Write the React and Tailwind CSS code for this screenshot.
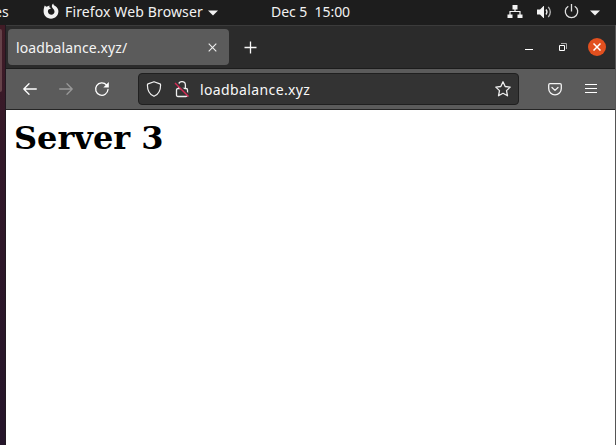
function FirefoxGlyph() {
  return (
    <svg width="16" height="16" viewBox="0 0 16 16" className="shrink-0">
      <path fill="#f2f2f2" fillRule="evenodd" d="M1.800 2.600 3.200 3.800 4.800 3.200 6.500 2.500 6.300 4.200 7.800 5 7.500 5.800 6 6.200C5 6.800 4.800 8 5 9c.4 1.700 1.700 2.700 3.300 2.700 2 0 3.300-1.500 3.200-3.300-.1-1.500-1-2.300-1.800-3.200C8.200 3.600 8.700 1.600 10.200.4c.2 1.500 1.200 1.900 2.400 2.900 1.700 1.300 2.800 2.900 2.800 5 0 4.200-3.200 7.400-7.400 7.400S.6 12.500.6 8.300C.6 6 1 4.300 1.800 2.600Z" />
    </svg>
  );
}

function Caret() {
  return (
    <svg width="10" height="6" viewBox="0 0 10 6" className="shrink-0">
      <path fill="#f2f2f2" d="M0 .5h10L5 5.500Z" />
    </svg>
  );
}

function NetworkIcon() {
  return (
    <svg width="16" height="14" viewBox="0 0 16 14" className="shrink-0">
      <path fill="#f2f2f2" d="M5.500 0h5v4.500h-5ZM.5 9.500h5V13h-5ZM10.500 9.500h5V13h-5Z" />
      <path fill="none" stroke="#f2f2f2" strokeWidth="1.200" d="M8 4v3M3 10V6.500h10V10" />
    </svg>
  );
}

function VolumeIcon() {
  return (
    <svg width="16" height="14" viewBox="0 0 16 14" className="shrink-0">
      <path fill="#f2f2f2" d="M1 4.500h3L7.500 1H8v12h-.5L4 9.500H1Z" />
      <path fill="none" stroke="#f2f2f2" strokeWidth="1.300" d="M10 4.500q2 2.500 0 5" />
      <path fill="none" stroke="#b8b8b8" strokeWidth="1.300" d="M12.300 1.800q4 5.200 0 10.400" />
    </svg>
  );
}

function PowerIcon() {
  return (
    <svg width="15" height="15" viewBox="0 0 15 15" fill="none" stroke="#e0e0e0" strokeWidth="1.300" className="shrink-0">
      <path d="M4.300 2.200a6.200 6.200 0 1 0 6.400 0M7.500 0v7.500" />
    </svg>
  );
}

function TopBar() {
  return (
    <div className="flex h-[25px] shrink-0 items-center bg-[#1d1d1d] text-[14px] leading-none text-[#f2f2f2]">
      <div className="flex w-[43px] shrink-0">
        <span className="-ml-[6px] pb-px">es</span>
      </div>
      <div className="-mt-[3px]"><FirefoxGlyph /></div>
      <div className="ml-[6px] w-[143px] whitespace-nowrap pb-px text-[14px] tracking-[0.13px]">Firefox Web Browser</div>
      <Caret />
      <div className="ml-[53px] w-[80px] whitespace-pre pb-px tracking-[-0.040px]">Dec 5  15:00</div>
      <div className="ml-auto flex items-center pr-[16px] pb-[2px]">
        <NetworkIcon />
        <div className="ml-[13px]"><VolumeIcon /></div>
        <div className="ml-[12px]"><PowerIcon /></div>
        <div className="ml-[11px] pt-[2px]"><Caret /></div>
      </div>
    </div>
  );
}

function TabStrip() {
  return (
    <div className="flex h-[44px] shrink-0 items-center border-t border-b border-t-[#3b3b3b] border-b-[#1c1c1c] bg-[#2b2b2b] pl-[2px]">
      <div className="flex h-[36px] w-[221px] items-center justify-between rounded-[4px] bg-[#5b5b5b] pr-[12px] pl-[8px]">
        <span className="pt-px text-[14px] leading-none tracking-[0.09px] text-[#f4f4f4]">loadbalance.xyz/</span>
        <svg width="9" height="9" viewBox="0 0 9 9" stroke="#efefef" strokeWidth="1.100">
          <path d="M.7.7l7.600 7.600M8.300.7L.7 8.300" />
        </svg>
      </div>
      <svg width="13" height="13" viewBox="0 0 13 13" stroke="#f8f8f8" strokeWidth="1.300" className="ml-[15px]">
        <path d="M6.500 .5v12M.5 6.500h12" />
      </svg>
      <div className="ml-auto flex items-center pr-[9px]">
        <div className="mt-[5px] h-px w-[8px] bg-white" />
        <svg width="8" height="8" viewBox="0 0 8 8" fill="none" className="ml-[26px]">
          <path stroke="#aaa" d="M2 .5h5.500V6" />
          <path stroke="#fff" d="M.5 2.500h5v5h-5Z" />
        </svg>
        <div className="ml-[21px] flex size-[18px] items-center justify-center rounded-full bg-[#e2501f]">
          <svg width="8" height="8" viewBox="0 0 8 8" stroke="#fff" strokeWidth="1.500">
            <path d="M.5.5l7 7M7.500.5l-7 7" />
          </svg>
        </div>
      </div>
    </div>
  );
}

function AddressField() {
  return (
    <div className="ml-[28px] flex h-[32px] w-[381px] items-center rounded-[4px] border border-[#202020] bg-[#333] pr-[7px] pl-[7px]">
      <svg width="16" height="16" viewBox="0 0 16 16" fill="none" stroke="#f0f0f0" strokeWidth="1.200" strokeLinejoin="round">
        <path d="M8 .7 13.900 2.900q.7.300.7 1C14.600 9.200 12.600 13.300 8 15.300 3.400 13.300 1.400 9.200 1.400 3.900q0-.7.700-1Z" />
      </svg>
      <svg width="16" height="17" viewBox="0 0 16 17" fill="none" stroke="#eee" strokeWidth="1.300" className="ml-[12px]">
        <path d="M4.600 7.500V4a3.400 3.400 0 0 1 6.800 0v3.500M4 7.500h8q1.500 0 1.500 1.500v5q0 1.500-1.500 1.500H4q-1.500 0-1.500-1.500V9q0-1.500 1.500-1.500Z" />
        <path stroke="#333" strokeWidth="2.400" d="m2.500 2.200 12.500 12.500" />
        <path stroke="#d52a55" strokeWidth="1.400" d="m1 2 13.500 13.500" />
      </svg>
      <span className="ml-[10px] pt-px text-[14px] leading-none tracking-[0.38px] text-[#f8f8f8]">loadbalance.xyz</span>
      <svg width="16" height="16" viewBox="0 0 16 16" fill="none" stroke="#eee" strokeWidth="1.300" strokeLinejoin="round" className="ml-auto">
        <path d="m8 .8 2.200 4.700 5 .6-3.700 3.500 1 5.200L8 12.300l-4.500 2.500 1-5.200L.8 6.100l5-.6Z" />
      </svg>
    </div>
  );
}

function Toolbar() {
  return (
    <div className="flex h-[41px] shrink-0 items-center border-b border-[#252525] bg-[#5b5b5b] pl-[17px]">
      <svg width="14" height="12" viewBox="0 0 14 12" fill="none" stroke="#fff" strokeWidth="1.300" strokeLinecap="round" strokeLinejoin="round">
        <path d="M13.300 6H.8M6 .8.8 6 6 11.200" />
      </svg>
      <svg width="14" height="12" viewBox="0 0 14 12" fill="none" stroke="#999" strokeWidth="1.300" strokeLinecap="round" strokeLinejoin="round" className="ml-[22px]">
        <path d="M.7 6h12.500M8 .8 13.200 6 8 11.200" />
      </svg>
      <svg width="16" height="16" viewBox="0 0 16 16" className="ml-[21px]">
        <path fill="none" stroke="#fff" strokeWidth="1.300" strokeLinecap="round" d="M12.500 4A6.200 6.200 0 1 0 14 8.500" />
        <path fill="#fff" d="M14.800 1v5.500H9.300Z" />
      </svg>
      <AddressField />
      <svg width="14" height="13" viewBox="0 0 14 13" fill="none" stroke="#f4f4f4" strokeWidth="1.300" strokeLinecap="round" strokeLinejoin="round" className="ml-[29px]">
        <path d="M2 .7h10q1.300 0 1.300 1.300v3.500a6.300 6.300 0 0 1-12.600 0V2Q.7.700 2 .7ZM4 4.500l3 2.900 3-2.900" />
      </svg>
      <svg width="12" height="11" viewBox="0 0 12 11" stroke="#fff" strokeWidth="1.200" className="-mt-px ml-[23px]">
        <path d="M0 1.500h12M0 5.500h12M0 9.500h12" />
      </svg>
    </div>
  );
}

export default function App() {
  return (
    <div className="flex h-[445px] w-[616px] flex-col overflow-hidden font-['Noto_Sans',sans-serif]">
      <TopBar />
      <div className="flex min-h-0 flex-1">
        <div className="w-[6px] shrink-0 border-r border-[#211820] bg-linear-to-b from-[#421c26] via-[#321829] via-30% to-[#25152a]">
          <div className="mt-[4px] h-[63px] w-[2px] rounded-r-[2px] bg-[#654249]" />
        </div>
        <div className="flex min-w-0 flex-1 flex-col border-r border-[#555] bg-white">
          <TabStrip />
          <Toolbar />
          <main className="pt-[10px] pl-[8px]">
            <h1 className="font-['DejaVu_Serif',serif] text-[32px] leading-[37px] font-bold text-black">Server 3</h1>
          </main>
        </div>
      </div>
    </div>
  );
}
